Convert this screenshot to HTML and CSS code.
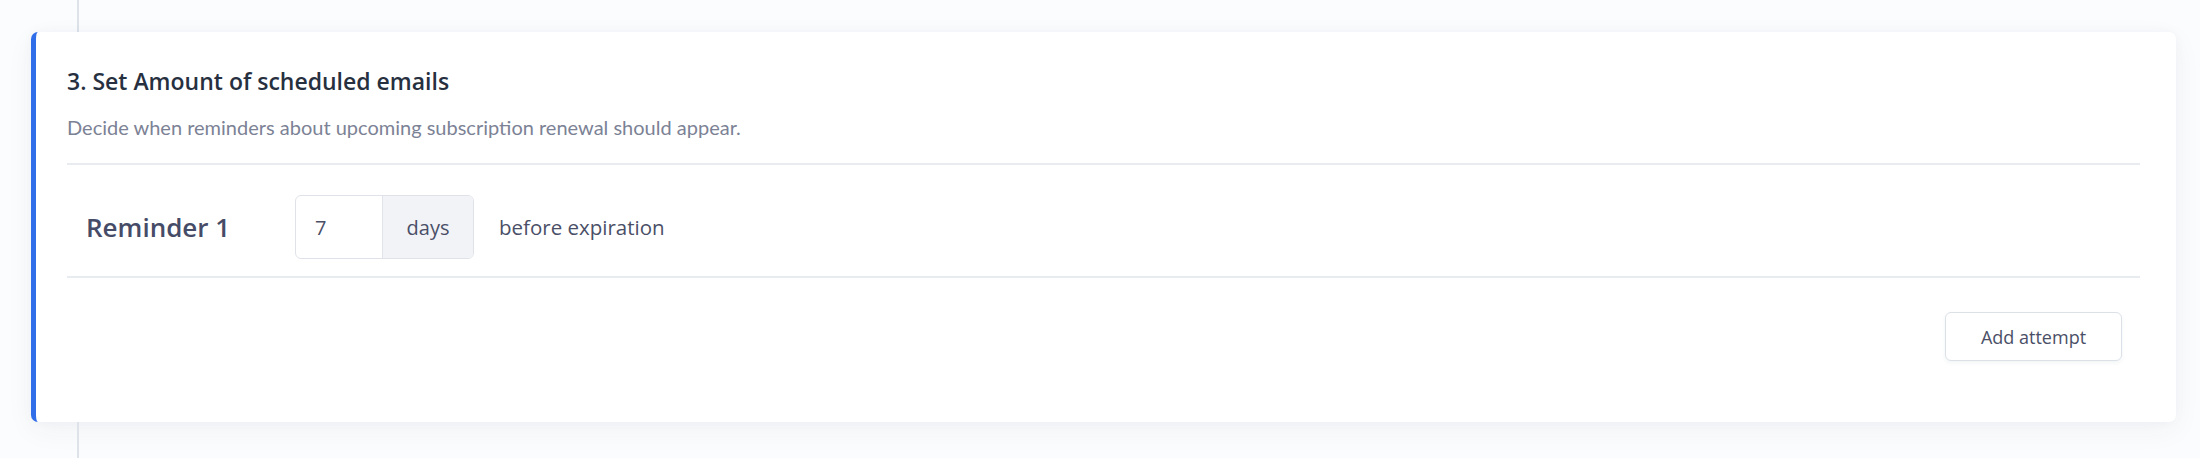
FILE: index.html
```html
<!DOCTYPE html>
<html lang="en">
<head>
<meta charset="utf-8">
<title>Scheduled emails</title>
<link rel="stylesheet" href="styles.css">
</head>
<body>
<div class="page">
  <div class="connector connector-top"></div>
  <section class="card">
    <header class="card-head">
      <h2 class="card-title">3. Set Amount of scheduled emails</h2>
      <p class="card-sub">Decide when reminders about upcoming subscription renewal should appear.</p>
    </header>
    <div class="reminder-row">
      <div class="reminder-label">Reminder 1</div>
      <div class="input-group">
        <div class="input-value">7</div>
        <div class="input-addon">days</div>
      </div>
      <div class="reminder-suffix">before expiration</div>
    </div>
    <div class="card-foot">
      <button class="btn" type="button">Add attempt</button>
    </div>
  </section>
  <div class="connector connector-bottom"></div>
</div>
</body>
</html>
```

FILE: styles.css
```css
html, body {
  margin: 0;
  padding: 0;
}
body {
  background: #fbfcfd;
  font-family: "Open Sans", "Noto Sans", sans-serif;
  height: 458px;
  overflow: hidden;
}
.page {
  display: flex;
  flex-direction: column;
}
.connector {
  width: 2px;
  margin-left: 77px;
  background: #dde3e9;
}
.connector-top { height: 32px; }
.connector-bottom { height: 40px; }
.card {
  margin: 0 24px 0 31px;
  height: 390px;
  box-sizing: border-box;
  background: #ffffff;
  border-left: 5px solid #306ee9;
  border-radius: 7px;
  box-shadow: 0 8px 28px rgba(40, 60, 90, 0.05), 0 0 12px rgba(40, 60, 90, 0.03);
  padding: 33px 36px 0 31px;
  display: flex;
  flex-direction: column;
}
.card-head {
  padding-bottom: 22px;
  border-bottom: 2px solid #e8ecf1;
}
.card-title {
  margin: 0;
  font-size: 23px;
  line-height: 32px;
  font-weight: 600;
  color: #27303f;
}
.card-sub {
  margin: 16px 0 0;
  font-family: "Lato", "Noto Sans", sans-serif;
  font-size: 20px;
  line-height: 28px;
  color: #7c8295;
}
.reminder-row {
  display: flex;
  align-items: center;
  padding: 30px 0 17px;
  border-bottom: 2px solid #e8ecf1;
}
.reminder-label {
  width: 228px;
  box-sizing: border-box;
  padding-left: 19px;
  font-size: 26px;
  font-weight: 600;
  color: #464c67;
}
.input-group {
  display: flex;
  height: 64px;
  width: 179px;
  box-sizing: border-box;
  border: 1px solid #dfe3e9;
  border-radius: 6px;
  overflow: hidden;
}
.input-value {
  width: 87px;
  box-sizing: border-box;
  padding-left: 19px;
  display: flex;
  align-items: center;
  font-size: 20px;
  color: #4a4f67;
  border-right: 1px solid #e1e4ea;
}
.input-addon {
  flex: 1;
  display: flex;
  align-items: center;
  justify-content: center;
  background: #f2f3f7;
  font-size: 20px;
  color: #4a4f67;
}
.reminder-suffix {
  margin-left: 25px;
  font-size: 20.5px;
  color: #4a4f67;
}
.card-foot {
  display: flex;
  justify-content: flex-end;
  padding: 34px 18px 0 0;
}
.btn {
  width: 177px;
  height: 49px;
  background: #ffffff;
  border: 1px solid #dce1e8;
  border-radius: 6px;
  box-shadow: 0 2px 4px rgba(40, 60, 90, 0.06);
  font-family: "Open Sans", "Noto Sans", sans-serif;
  font-size: 18px;
  color: #4a4f67;
  padding: 0;
}
```
